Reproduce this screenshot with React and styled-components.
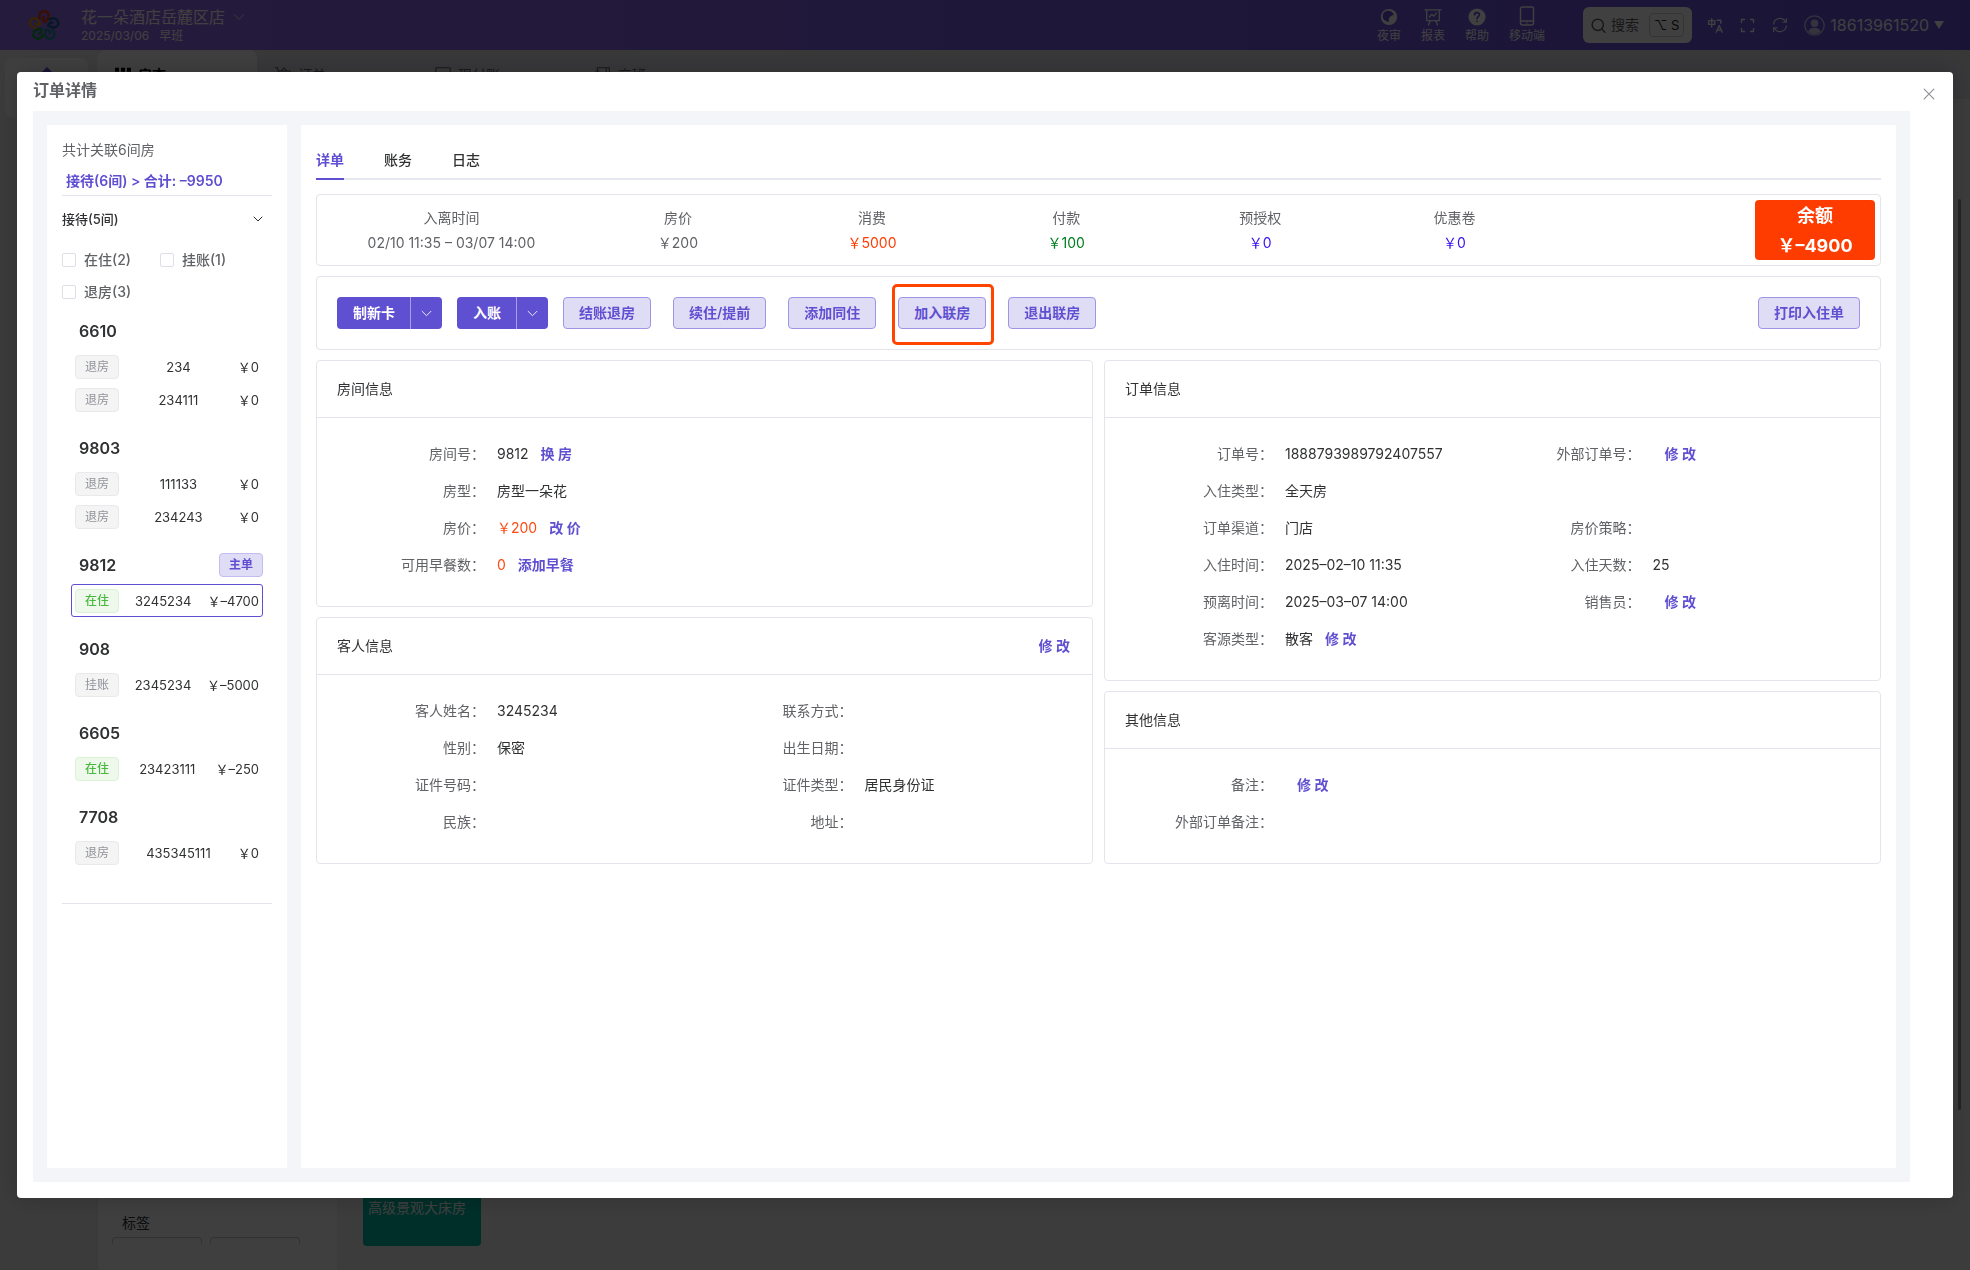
import React, { useState } from "react";
import styled, { createGlobalStyle, css } from "styled-components";

const primary = "#5f4fd1";
const line = "#e4e4ec";

const GlobalStyle = createGlobalStyle`
	* {
		box-sizing: border-box;
	}
	body {
		margin: 0;
		color: #303133;
		background: #f5f5f5;
		font-family: Inter, "Noto Sans CJK SC", sans-serif;
		font-size: 14px;
		line-height: 20px;
	}
	button,
	input {
		font: inherit;
	}
	h1,
	h2,
	h3,
	p,
	dl,
	dd,
	ul {
		margin: 0;
		padding: 0;
	}
`;

/* ---------- page behind the dialog ---------- */

const Page = styled.div`
	height: 100vh;
	display: flex;
	flex-direction: column;
	overflow: hidden;
`;

const TopBar = styled.header`
	flex: none;
	height: 50px;
	display: flex;
	align-items: center;
	padding: 0 26px 0 28px;
	color: #fff;
	background: linear-gradient(90deg, #946cf0, #6650d8);
`;

const Hotel = styled.div`
	flex: 1;
	margin-left: 21px;
`;

const HotelName = styled.div`
	display: flex;
	align-items: center;
	gap: 8px;
	font-size: 16px;
	line-height: 22px;
`;

const Shift = styled.div`
	display: flex;
	gap: 10px;
	font-size: 12px;
	line-height: 16px;
`;

const Shortcuts = styled.nav`
	display: flex;
	gap: 20px;
	margin-right: 38px;
`;

const Shortcut = styled.a`
	display: flex;
	flex-direction: column;
	align-items: center;
	justify-content: flex-end;
	gap: 2px;
	color: #fff;
	font-size: 12px;
	line-height: 16px;
	text-decoration: none;
`;

const SearchBox = styled.button`
	display: flex;
	align-items: center;
	height: 36px;
	padding: 0 8px;
	gap: 5px;
	border: 0;
	border-radius: 6px;
	background: #fff;
	color: #606060;
`;

const Kbd = styled.kbd`
	margin-left: 5px;
	padding: 0 4px;
	border: 1px solid #d0d0d0;
	border-radius: 4px;
	color: #222;
	font: inherit;
	font-size: 13px;
	line-height: 22px;
`;

const Tools = styled.div`
	display: flex;
	align-items: center;
	gap: 17px;
	margin: 0 16px;
`;

const Account = styled.div`
	display: flex;
	align-items: center;
	gap: 5px;
	font-size: 16px;
`;

const Workspace = styled.div`
	flex: 1;
	min-height: 0;
	display: flex;
	background: #ebebeb;
`;

const SideNav = styled.aside`
	flex: none;
	width: 97px;
	padding: 8px 9px 0 5px;
`;

const SideNavItem = styled.div`
	height: 60px;
	padding-top: 9px;
	border-radius: 8px;
	text-align: center;
	background: #f8f8f8;
`;

const WorkArea = styled.div`
	flex: 1;
	display: flex;
	flex-direction: column;
`;

const PageTabs = styled.nav`
	flex: none;
	display: flex;
	height: 49px;
	background: #dedee4;
`;

const PageTab = styled.a`
	display: flex;
	align-items: center;
	gap: 7px;
	width: 160px;
	padding: 0 18px;
	color: ${(p) => (p.$active ? "#000" : "#606266")};
	font-weight: ${(p) => (p.$active ? 700 : 400)};
	text-decoration: none;
	border-radius: 8px 8px 0 0;
	background: ${(p) => (p.$active ? "#f8f8f8" : "transparent")};
`;

const WorkBody = styled.div`
	flex: 1;
	display: flex;
`;

const FilterPanel = styled.div`
	width: 240px;
	display: flex;
	flex-direction: column;
	justify-content: flex-end;
	padding: 0 14px 26px;
	border-left: 1px solid #e2e2e2;
	background: #fafafa;
`;

const FilterTitle = styled.h3`
	padding: 13px 10px 4px;
	border-top: 1px solid #eee;
	font-size: 14px;
	font-weight: 400;
`;

const FilterOptions = styled.div`
	display: flex;
	gap: 8px;
`;

const FilterOption = styled.div`
	width: 90px;
	height: 7px;
	border: 1px solid #c8c8c8;
	border-bottom: 0;
	border-radius: 4px 4px 0 0;
`;

const RoomBoard = styled.div`
	position: relative;
	flex: 1;
	display: flex;
	align-items: flex-end;
	padding: 0 10px 24px 26px;
	background: #efefef;
	/* scrollbar thumb */
	&::after {
		content: "";
		position: absolute;
		top: 100px;
		right: 9px;
		bottom: 160px;
		width: 3px;
		border-radius: 2px;
		background: #909090;
	}
`;

const RoomTile = styled.div`
	width: 118px;
	height: 110px;
	padding: 62px 5px 0;
	border-radius: 4px;
	color: #fff;
	background: #00b8a0;
`;

/* ---------- dialog ---------- */

const Overlay = styled.div`
	position: fixed;
	inset: 0;
	display: flex;
	padding: 72px 17px;
	background: rgba(0, 0, 0, 0.75);
`;

const Dialog = styled.section`
	position: relative;
	flex: 1;
	display: flex;
	flex-direction: column;
	padding: 6px 16px 16px;
	border-radius: 4px;
	background: #fff;
	box-shadow: 0 0 24px rgba(0, 0, 0, 0.2);
`;

const DialogTitle = styled.h1`
	margin-bottom: 9px;
	color: #606266;
	font-size: 16px;
	font-weight: 600;
	line-height: 24px;
`;

const CloseButton = styled.button`
	position: absolute;
	top: 10px;
	right: 12px;
	width: 24px;
	height: 24px;
	padding: 0;
	border: 0;
	line-height: 0;
	background: none;
	color: #909399;
`;

const DialogBody = styled.div`
	flex: 1;
	min-height: 0;
	display: flex;
	gap: 14px;
	margin-right: 27px;
	padding: 14px;
	background: #f4f5f8;
`;

const Sidebar = styled.aside`
	flex: none;
	width: 240px;
	padding: 15px;
	background: #fff;
`;

const Main = styled.main`
	flex: 1;
	min-width: 0;
	display: flex;
	flex-direction: column;
	gap: 10px;
	padding: 15px;
	background: #fff;
`;

const LinkedTotal = styled.p`
	color: #606266;
`;

const LinkedSummary = styled.p`
	padding: 11px 4px 4px;
	border-bottom: 1px solid ${line};
	color: ${primary};
	font-weight: 600;
`;

const GroupToggle = styled.button`
	display: flex;
	align-items: center;
	justify-content: space-between;
	width: 100%;
	height: 46px;
	padding: 0 9px 0 0;
	border: 0;
	background: none;
	color: #303133;
	font-size: 13px;
	font-weight: 500;
`;

const Filters = styled.div`
	display: flex;
	flex-wrap: wrap;
	column-gap: 29px;
	padding-top: 2px;
`;

const CheckLabel = styled.label`
	display: flex;
	align-items: center;
	gap: 8px;
	height: 32px;
	color: #606266;
	font-weight: 500;
`;

const Checkbox = styled.input`
	appearance: none;
	width: 14px;
	height: 14px;
	margin: 0;
	border: 1px solid #dcdfe6;
	border-radius: 2px;
	background: #fff;
	&:checked {
		border-color: ${primary};
		background: ${primary};
	}
`;

const RoomList = styled.div`
	display: flex;
	flex-direction: column;
	gap: 13px;
	padding: 4px 9px 34px;
	border-bottom: 1px solid ${line};
`;

const RoomHead = styled.div`
	display: flex;
	align-items: center;
	justify-content: space-between;
	height: 38px;
	padding-left: 8px;
`;

const RoomNumber = styled.h3`
	font-size: 16px;
	font-weight: 600;
`;

const GuestRow = styled.div`
	display: flex;
	align-items: center;
	justify-content: space-between;
	height: 33px;
	padding: 0 3px;
	border: 1px solid ${(p) => (p.$active ? primary : "transparent")};
	border-radius: 3px;
	font-size: 13px;
`;

const tagColors = {
	info: css`
		color: #909399;
		border-color: #e9e9eb;
		background: #f4f4f5;
	`,
	success: css`
		color: #47b840;
		border-color: #daf3d4;
		background: #eef9eb;
		font-weight: 500;
	`,
	primary: css`
		color: ${primary};
		border-color: #c4bcf0;
		background: #dfdcf5;
		font-weight: 600;
	`,
};

const Tag = styled.span`
	padding: 0 9px;
	border: 1px solid;
	border-radius: 4px;
	font-size: 12px;
	line-height: 22px;
	${(p) => tagColors[p.$type]}
`;

const Tabs = styled.div`
	display: flex;
	gap: 40px;
	margin-bottom: 4px;
	border-bottom: 2px solid #e4e7ed;
`;

const Tab = styled.button`
	height: 40px;
	margin-bottom: -2px;
	padding: 2px 0 0;
	border: 0;
	border-bottom: 2px solid ${(p) => (p.$active ? primary : "transparent")};
	background: none;
	color: ${(p) => (p.$active ? primary : "#303133")};
	font-weight: ${(p) => (p.$active ? 600 : 500)};
`;

const Card = styled.section`
	border: 1px solid ${line};
	border-radius: 4px;
`;

const SummaryCard = styled(Card)`
	display: grid;
	grid-template-columns: 4fr repeat(5, 3fr) 5fr;
	align-items: center;
	padding: 5px;
`;

const Stat = styled.div`
	color: #606266;
	line-height: 25px;
	text-align: center;
`;

const StatValue = styled.div`
	color: ${(p) => p.$color || "inherit"};
`;

const Balance = styled.div`
	justify-self: end;
	width: 120px;
	height: 60px;
	padding-top: 1px;
	border-radius: 4px;
	background: #ff3c00;
	color: #fff;
	font-size: 18px;
	font-weight: 700;
	line-height: 30px;
	text-align: center;
`;

const ActionCard = styled(Card)`
	display: flex;
	align-items: center;
	height: 74px;
	padding: 0 20px;
`;

const SplitButton = styled.div`
	display: flex;
	margin-right: 15px;
`;

const SolidButton = styled.button`
	height: 32px;
	padding: 0 15px 0 16px;
	border: 0;
	border-radius: 4px 0 0 4px;
	background: ${primary};
	color: #fff;
	font-weight: 600;
	& + & {
		width: 32px;
		padding: 0;
		line-height: 0;
		border-left: 1px solid #a79de8;
		border-radius: 0 4px 4px 0;
	}
`;

const PlainButton = styled.button`
	height: 32px;
	padding: 0 15px;
	border: 1px solid #9f94e6;
	border-radius: 4px;
	background: #dfdcf5;
	color: ${primary};
	font-weight: 600;
`;

const PlainGroup = styled.div`
	flex: 1;
	display: flex;
	gap: 22px;
`;

const Highlighted = styled.div`
	position: relative;
	&::after {
		content: "";
		position: absolute;
		inset: -13px -8px -16px -6px;
		border: 3px solid #ff4500;
		border-radius: 5px;
		pointer-events: none;
	}
`;

const Columns = styled.div`
	display: grid;
	grid-template-columns: 1fr 1fr;
	gap: 11px;
`;

const Column = styled.div`
	display: flex;
	flex-direction: column;
	gap: 10px;
`;

const CardHeader = styled.header`
	display: flex;
	align-items: center;
	justify-content: space-between;
	height: 57px;
	padding: 0 22px 0 20px;
	border-bottom: 1px solid ${line};
`;

const CardTitle = styled.h2`
	font-size: 14px;
	font-weight: 400;
`;

const Fields = styled.dl`
	display: grid;
	grid-template-columns: repeat(${(p) => p.$columns}, 1fr);
	row-gap: 5px;
	padding: 20px 20px 25px;
`;

const Field = styled.div`
	display: flex;
	align-items: center;
	height: 32px;
`;

const FieldLabel = styled.dt`
	width: 160px;
	padding-right: 12px;
	color: #606266;
	text-align: right;
`;

const FieldValue = styled.dd`
	color: ${(p) => (p.$hot ? "#ff4a12" : "#303133")};
`;

const LinkButton = styled.button`
	margin-left: ${(p) => (p.$flush ? "0" : "12px")};
	padding: 0;
	border: 0;
	background: none;
	color: ${primary};
	font-weight: 600;
`;

/* ---------- icons ---------- */

const Icon = ({ size = 18, width = 1.4, children, ...rest }) => (
	<svg
		width={size}
		height={size}
		viewBox="0 0 20 20"
		fill="none"
		stroke="currentColor"
		strokeWidth={width}
		strokeLinecap="round"
		strokeLinejoin="round"
		aria-hidden="true"
		{...rest}
	>
		{children}
	</svg>
);

const ChevronIcon = (props) => (
	<Icon size={12} {...props}>
		<path d="M2 6l8 8 8-8" />
	</Icon>
);

const petals = ["#e8380d", "#1f5f8e", "#189098", "#12a03c", "#e08a1a"];

const Logo = () => (
	<svg width="32" height="32" viewBox="0 0 32 32" fill="none" aria-hidden="true">
		{petals.map((color, i) => (
			<path
				key={color}
				transform={`rotate(${i * 72} 16 17)`}
				d="M11.500 9.500C10.500 5 13 2.300 16 2.300C19.500 2.300 21.800 5.500 20.300 8.500C19.500 10.200 18 11.500 16.800 13C14.800 11.500 14.200 9.500 15.500 7.800"
				stroke={color}
				strokeWidth="2.400"
				strokeLinecap="round"
			/>
		))}
	</svg>
);

const MoonIcon = () => (
	<Icon>
		<circle cx="10" cy="10" r="9" fill="currentColor" stroke="none" />
		<path d="M9 3.500c1 4-1.500 7-5.500 8 2 5 8 5.500 11 2.500 3.500-4 1-10-5.500-10.500z" fill="#6650d8" stroke="none" transform="rotate(180 9.500 9.500)" />
	</Icon>
);

const BoardIcon = () => (
	<Icon>
		<path d="M1 2h18M3 2v12h14V2M7 14l-2 5M13 14l2 5M6 10l2.500-3 2.500 2 3-3.500" />
	</Icon>
);

const HelpIcon = () => (
	<Icon>
		<circle cx="10" cy="10" r="9.500" fill="currentColor" stroke="none" />
		<path d="M7.300 7.800c0-3.600 5.400-3.500 5.400-.2 0 2-2.700 2.200-2.700 4.300M10 14.800v.2" stroke="#6650d8" strokeWidth="1.800" />
	</Icon>
);

const PhoneIcon = () => (
	<Icon size={20}>
		<rect x="3.500" y="1" width="13" height="18" rx="2" />
		<path d="M3.500 15h13M10 17v.1" />
	</Icon>
);

const SearchIcon = () => (
	<Icon size={15} width={2}>
		<circle cx="9" cy="9" r="7.500" />
		<path d="M14.500 14.500L18.500 19" />
	</Icon>
);

const TranslateIcon = () => (
	<Icon size={15} width={1.8}>
		<path d="M1 3.500h8v5H1zM5 1v11M11 19l4-9 4 9M12.500 16h5M12 3h5v4" />
	</Icon>
);

const FullscreenIcon = () => (
	<Icon size={15} width={1.8}>
		<path d="M2 6V2h4M14 2h4v4M18 14v4h-4M6 18H2v-4" />
	</Icon>
);

const RefreshIcon = () => (
	<Icon size={16}>
		<path d="M2 9a8 8 0 0 1 15-3M18 2v4.500h-4.500M18 11a8 8 0 0 1-15 3M2 18v-4.500h4.500" />
	</Icon>
);

const AvatarIcon = () => (
	<Icon size={21} width={1.2} opacity="0.7">
		<circle cx="10" cy="10" r="9.200" />
		<circle cx="10" cy="7.800" r="3.600" fill="currentColor" stroke="none" />
		<path d="M4 16c1-5 11-5 12 0a9 9 0 0 1-12 0z" fill="currentColor" stroke="none" />
	</Icon>
);

const CaretIcon = () => (
	<Icon size={10}>
		<path d="M0 2h20L10 18z" fill="currentColor" stroke="none" />
	</Icon>
);

const GridIcon = () => (
	<Icon size={16}>
		<path
			d="M0 1h5v5H0zM7.500 1h5v5h-5zM15 1h5v5h-5zM0 8h5v5H0zM7.500 8h5v5h-5zM15 8h5v5h-5z"
			fill="currentColor"
			stroke="none"
		/>
	</Icon>
);

const CartIcon = () => (
	<Icon size={16}>
		<path d="M0 1h3l3 12h11l2-8H4.500M8 5l3-4 4 4" />
	</Icon>
);

const LedgerIcon = () => (
	<Icon size={16}>
		<path d="M1 1h18v18H1zM6 7l4 4 4-4M10 11v5" />
	</Icon>
);

const BookIcon = () => (
	<Icon size={16}>
		<path d="M3 1h15v18H3zM14 1v18M1 5h4M1 10h4" />
	</Icon>
);

/* ---------- data ---------- */

const rooms = [
	{
		number: "6610",
		guests: [
			{ state: "退房", name: "234", amount: "￥0" },
			{ state: "退房", name: "234111", amount: "￥0" },
		],
	},
	{
		number: "9803",
		guests: [
			{ state: "退房", name: "111133", amount: "￥0" },
			{ state: "退房", name: "234243", amount: "￥0" },
		],
	},
	{
		number: "9812",
		main: true,
		guests: [{ state: "在住", name: "3245234", amount: "￥–4700", active: true }],
	},
	{ number: "908", guests: [{ state: "挂账", name: "2345234", amount: "￥–5000" }] },
	{ number: "6605", guests: [{ state: "在住", name: "23423111", amount: "￥–250" }] },
	{ number: "7708", guests: [{ state: "退房", name: "435345111", amount: "￥0" }] },
];

const stats = [
	{ label: "入离时间", value: "02/10 11:35 – 03/07 14:00" },
	{ label: "房价", value: "￥200" },
	{ label: "消费", value: "￥5000", color: "#ff3c00" },
	{ label: "付款", value: "￥100", color: "#008020" },
	{ label: "预授权", value: "￥0", color: "#3a10f0" },
	{ label: "优惠卷", value: "￥0", color: "#3a10f0" },
];

const roomInfo = [
	{ label: "房间号", value: "9812", action: "换 房" },
	{ label: "房型", value: "房型一朵花" },
	{ label: "房价", value: "￥200", hot: true, action: "改 价" },
	{ label: "可用早餐数", value: "0", hot: true, action: "添加早餐" },
];

const guestInfo = [
	{ label: "客人姓名", value: "3245234" },
	{ label: "联系方式" },
	{ label: "性别", value: "保密" },
	{ label: "出生日期" },
	{ label: "证件号码" },
	{ label: "证件类型", value: "居民身份证" },
	{ label: "民族" },
	{ label: "地址" },
];

const orderInfo = [
	{ label: "订单号", value: "1888793989792407557" },
	{ label: "外部订单号", action: "修 改" },
	{ label: "入住类型", value: "全天房" },
	null,
	{ label: "订单渠道", value: "门店" },
	{ label: "房价策略" },
	{ label: "入住时间", value: "2025–02–10 11:35" },
	{ label: "入住天数", value: "25" },
	{ label: "预离时间", value: "2025–03–07 14:00" },
	{ label: "销售员", action: "修 改" },
	{ label: "客源类型", value: "散客", action: "修 改" },
];

const otherInfo = [{ label: "备注", action: "修 改" }, { label: "外部订单备注" }];

/* ---------- components ---------- */

const Background = () => (
	<Page>
		<TopBar>
			<Logo />
			<Hotel>
				<HotelName>
					花一朵酒店岳麓区店 <ChevronIcon />
				</HotelName>
				<Shift>
					<span>2025/03/06</span>
					<span>早班</span>
				</Shift>
			</Hotel>
			<Shortcuts>
				<Shortcut href="#audit">
					<MoonIcon />
					夜审
				</Shortcut>
				<Shortcut href="#report">
					<BoardIcon />
					报表
				</Shortcut>
				<Shortcut href="#help">
					<HelpIcon />
					帮助
				</Shortcut>
				<Shortcut href="#mobile">
					<PhoneIcon />
					移动端
				</Shortcut>
			</Shortcuts>
			<SearchBox>
				<SearchIcon />
				搜索
				<Kbd>⌥ S</Kbd>
			</SearchBox>
			<Tools>
				<TranslateIcon />
				<FullscreenIcon />
				<RefreshIcon />
			</Tools>
			<Account>
				<AvatarIcon />
				18613961520
				<CaretIcon />
			</Account>
		</TopBar>
		<Workspace>
			<SideNav>
				<SideNavItem>
					<Icon size={20} color={primary}>
						<path d="M10 0l9 9-9 9-9-9z" fill="currentColor" stroke="none" />
					</Icon>
				</SideNavItem>
			</SideNav>
			<WorkArea>
				<PageTabs>
					<PageTab href="#rooms" $active>
						<GridIcon />
						房态
					</PageTab>
					<PageTab href="#orders">
						<CartIcon />
						订单
					</PageTab>
					<PageTab href="#ledger">
						<LedgerIcon />
						现付账
					</PageTab>
					<PageTab href="#shift">
						<BookIcon />
						交班
					</PageTab>
				</PageTabs>
				<WorkBody>
					<FilterPanel>
						<FilterTitle>标签</FilterTitle>
						<FilterOptions>
							<FilterOption />
							<FilterOption />
						</FilterOptions>
					</FilterPanel>
					<RoomBoard>
						<RoomTile>高级景观大床房</RoomTile>
					</RoomBoard>
				</WorkBody>
			</WorkArea>
		</Workspace>
	</Page>
);

const InfoCard = ({ title, fields, columns = 1, action }) => (
	<Card>
		<CardHeader>
			<CardTitle>{title}</CardTitle>
			{action && <LinkButton $flush>{action}</LinkButton>}
		</CardHeader>
		<Fields $columns={columns}>
			{fields.map((field, i) =>
				field ? (
					<Field key={field.label}>
						<FieldLabel>{field.label}：</FieldLabel>
						<FieldValue $hot={field.hot}>{field.value}</FieldValue>
						{field.action && <LinkButton>{field.action}</LinkButton>}
					</Field>
				) : (
					<span key={i} />
				)
			)}
		</Fields>
	</Card>
);

const RoomSidebar = () => {
	const [open, setOpen] = useState(true);

	return (
		<Sidebar>
			<LinkedTotal>共计关联6间房</LinkedTotal>
			<LinkedSummary>接待(6间) &gt; 合计: –9950</LinkedSummary>
			<GroupToggle onClick={() => setOpen(!open)}>
				接待(5间)
				<ChevronIcon size={10} width={2} />
			</GroupToggle>
			{open && (
				<>
					<Filters>
						{["在住(2)", "挂账(1)", "退房(3)"].map((text) => (
							<CheckLabel key={text}>
								<Checkbox type="checkbox" />
								{text}
							</CheckLabel>
						))}
					</Filters>
					<RoomList>
						{rooms.map((room) => (
							<div key={room.number}>
								<RoomHead>
									<RoomNumber>{room.number}</RoomNumber>
									{room.main && <Tag $type="primary">主单</Tag>}
								</RoomHead>
								{room.guests.map((guest) => (
									<GuestRow key={guest.name} $active={guest.active}>
										<Tag $type={guest.state === "在住" ? "success" : "info"}>{guest.state}</Tag>
										<span>{guest.name}</span>
										<span>{guest.amount}</span>
									</GuestRow>
								))}
							</div>
						))}
					</RoomList>
				</>
			)}
		</Sidebar>
	);
};

const Actions = () => (
	<ActionCard>
		{["制新卡", "入账"].map((text) => (
			<SplitButton key={text}>
				<SolidButton>{text}</SolidButton>
				<SolidButton aria-label={`${text}更多`}>
					<ChevronIcon size={11} width={1.6} />
				</SolidButton>
			</SplitButton>
		))}
		<PlainGroup>
			<PlainButton>结账退房</PlainButton>
			<PlainButton>续住/提前</PlainButton>
			<PlainButton>添加同住</PlainButton>
			<Highlighted>
				<PlainButton>加入联房</PlainButton>
			</Highlighted>
			<PlainButton>退出联房</PlainButton>
		</PlainGroup>
		<PlainButton>打印入住单</PlainButton>
	</ActionCard>
);

const App = () => {
	const [tab, setTab] = useState("详单");

	return (
		<>
			<GlobalStyle />
			<Background />
			<Overlay>
				<Dialog role="dialog" aria-labelledby="dialog-title">
					<DialogTitle id="dialog-title">订单详情</DialogTitle>
					<CloseButton aria-label="关闭">
						<Icon size={12} width={2}>
							<path d="M2 2l16 16M18 2L2 18" />
						</Icon>
					</CloseButton>
					<DialogBody>
						<RoomSidebar />
						<Main>
							<Tabs>
								{["详单", "账务", "日志"].map((name) => (
									<Tab key={name} $active={tab === name} onClick={() => setTab(name)}>
										{name}
									</Tab>
								))}
							</Tabs>
							<SummaryCard>
								{stats.map((stat) => (
									<Stat key={stat.label}>
										{stat.label}
										<StatValue $color={stat.color}>{stat.value}</StatValue>
									</Stat>
								))}
								<Balance>
									余额
									<div>￥–4900</div>
								</Balance>
							</SummaryCard>
							<Actions />
							<Columns>
								<Column>
									<InfoCard title="房间信息" fields={roomInfo} />
									<InfoCard title="客人信息" fields={guestInfo} columns={2} action="修 改" />
								</Column>
								<Column>
									<InfoCard title="订单信息" fields={orderInfo} columns={2} />
									<InfoCard title="其他信息" fields={otherInfo} />
								</Column>
							</Columns>
						</Main>
					</DialogBody>
				</Dialog>
			</Overlay>
		</>
	);
};

export default App;
